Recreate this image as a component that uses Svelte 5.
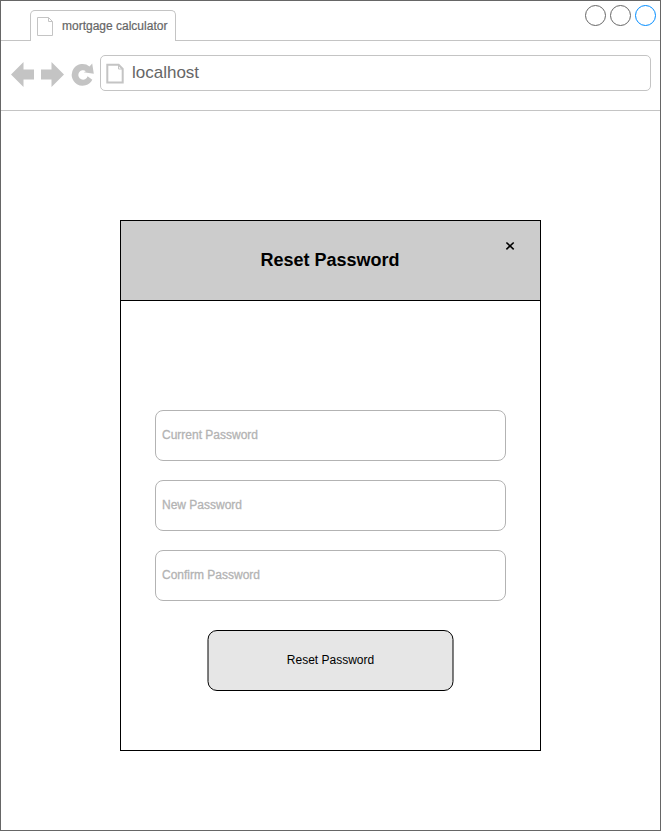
<script>
  const fields = ['Current Password', 'New Password', 'Confirm Password'];
</script>

<div class="window">
  <header class="tabs">
    <div class="tab">
      <svg width="17" height="20" viewBox="0 0 17 20" fill="none" stroke="#c4c4c4">
        <path d="M.5 .5H11.5L15.5 4.5V18.5H.5ZM11.5 .5V4.5H15.5" />
      </svg>
      <span>mortgage calculator</span>
    </div>
    <div class="controls">
      <i></i><i></i><i class="blue"></i>
    </div>
  </header>
  <nav class="bar">
    <svg class="nav-icons" width="84" height="26" viewBox="10 61 84 26" fill="#c4c4c4">
      <path d="M11 74.5L23.5 62V69.5H34V79.5H23.5V87Z" />
      <path d="M64 74.5L51.5 62V69.5H41V79.5H51.5V87Z" />
      <path d="M92.2 63.5L93.8 73.8L83.7 72.2L85.9 71.2A4.7 4.7 0 1 0 87.6 76.2L92.3 79.8A10.9 10.9 0 1 1 89.5 66.4Z" />
    </svg>
    <div class="url">
      <svg width="19" height="22" viewBox="0 0 19 22" fill="none" stroke="#c4c4c4" stroke-width="2">
        <path d="M1.3 1.7H12.6L16.7 6V19.6H1.3Z" />
        <path d="M12.5 2V6H16.5" stroke-width="1" />
      </svg>
      <span>localhost</span>
    </div>
  </nav>
  <main>
    <section class="dialog">
      <div class="head">
        <h1>Reset Password</h1>
        <svg class="close" width="10" height="10" viewBox="0 0 10 10" stroke="#000" stroke-width="1.6">
          <path d="M1.4 1.5L8.7 8.3M8.7 1.5L1.4 8.3" />
        </svg>
      </div>
      <div class="form">
        {#each fields as f}
          <div class="field">{f}</div>
        {/each}
        <button>
          <svg class="shape" width="247" height="61" viewBox="0 0 247 61" fill="#e6e6e6" stroke="#000">
            <rect x="1" y=".5" width="245" height="60" rx="9" />
          </svg>
          <span>Reset Password</span>
        </button>
      </div>
    </section>
  </main>
</div>

<style>
  .window {
    box-sizing: border-box;
    width: 661px;
    height: 831px;
    border: 1px solid #666;
    background: #fff;
    font-family: 'Liberation Sans', Arial, sans-serif;
    display: flex;
    flex-direction: column;
  }
  svg { display: block; flex: none; }
  .tabs {
    box-sizing: border-box;
    height: 40px;
    border-bottom: 1px solid #c4c4c4;
    display: flex;
    justify-content: space-between;
    padding: 0 4px 0 29px;
  }
  .tab {
    box-sizing: border-box;
    width: 146px;
    height: 31px;
    margin-top: 9px;
    border: 1px solid #c4c4c4;
    border-bottom: 0;
    border-radius: 5px 5px 0 0;
    background: #fff;
    display: flex;
    padding: 6px 0 0 6px;
    font-size: 12px;
    line-height: 18px;
    color: #666;
    white-space: nowrap;
    -webkit-text-stroke: 0.2px #666;
  }
  .tab span { margin-left: 8px; }
  .controls { display: flex; gap: 4px; padding-top: 4px; }
  .controls i {
    box-sizing: border-box;
    width: 21px;
    height: 21px;
    border: 1px solid #666;
    border-radius: 50%;
  }
  .controls .blue { border-color: #008cff; }
  .bar {
    box-sizing: border-box;
    height: 70px;
    border-bottom: 1px solid #c4c4c4;
    display: flex;
    padding: 14px 9px 0 9px;
  }
  .nav-icons { margin-top: 6px; }
  .url {
    box-sizing: border-box;
    flex: 1;
    height: 36px;
    margin-left: 6px;
    border: 1px solid #c4c4c4;
    border-radius: 5px;
    display: flex;
    padding: 7px 0 0 5px;
    font-size: 17px;
    line-height: 20px;
    color: #666;
  }
  .url span { margin-left: 7px; }
  main { flex: 1; padding: 109px 119px 0; }
  .dialog {
    box-sizing: border-box;
    width: 421px;
    height: 531px;
    border: 1px solid #000;
  }
  .head {
    box-sizing: border-box;
    position: relative;
    height: 80px;
    border-bottom: 1px solid #000;
    background: #ccc;
    display: flex;
    align-items: center;
    justify-content: center;
    padding: 0 1px 2px 0;
  }
  h1 { margin: 0; font-size: 18px; line-height: 22px; }
  .close { position: absolute; left: 384px; top: 20px; }
  .form {
    display: flex;
    flex-direction: column;
    align-items: center;
    gap: 19px;
    padding-top: 109px;
  }
  .field {
    box-sizing: border-box;
    width: 351px;
    height: 51px;
    border: 1px solid #b3b3b3;
    border-radius: 8px;
    padding-left: 6px;
    font-size: 12px;
    line-height: 48px;
    color: #b3b3b3;
    -webkit-text-stroke: 0.3px #b3b3b3;
  }
  button {
    position: relative;
    box-sizing: border-box;
    width: 247px;
    height: 61px;
    margin-top: 10px;
    padding: 0 0 1px;
    border: 0;
    background: none;
    font: 12px 'Liberation Sans', Arial, sans-serif;
    color: #000;
  }
  .shape { position: absolute; inset: 0; }
  button span { position: relative; }
</style>
